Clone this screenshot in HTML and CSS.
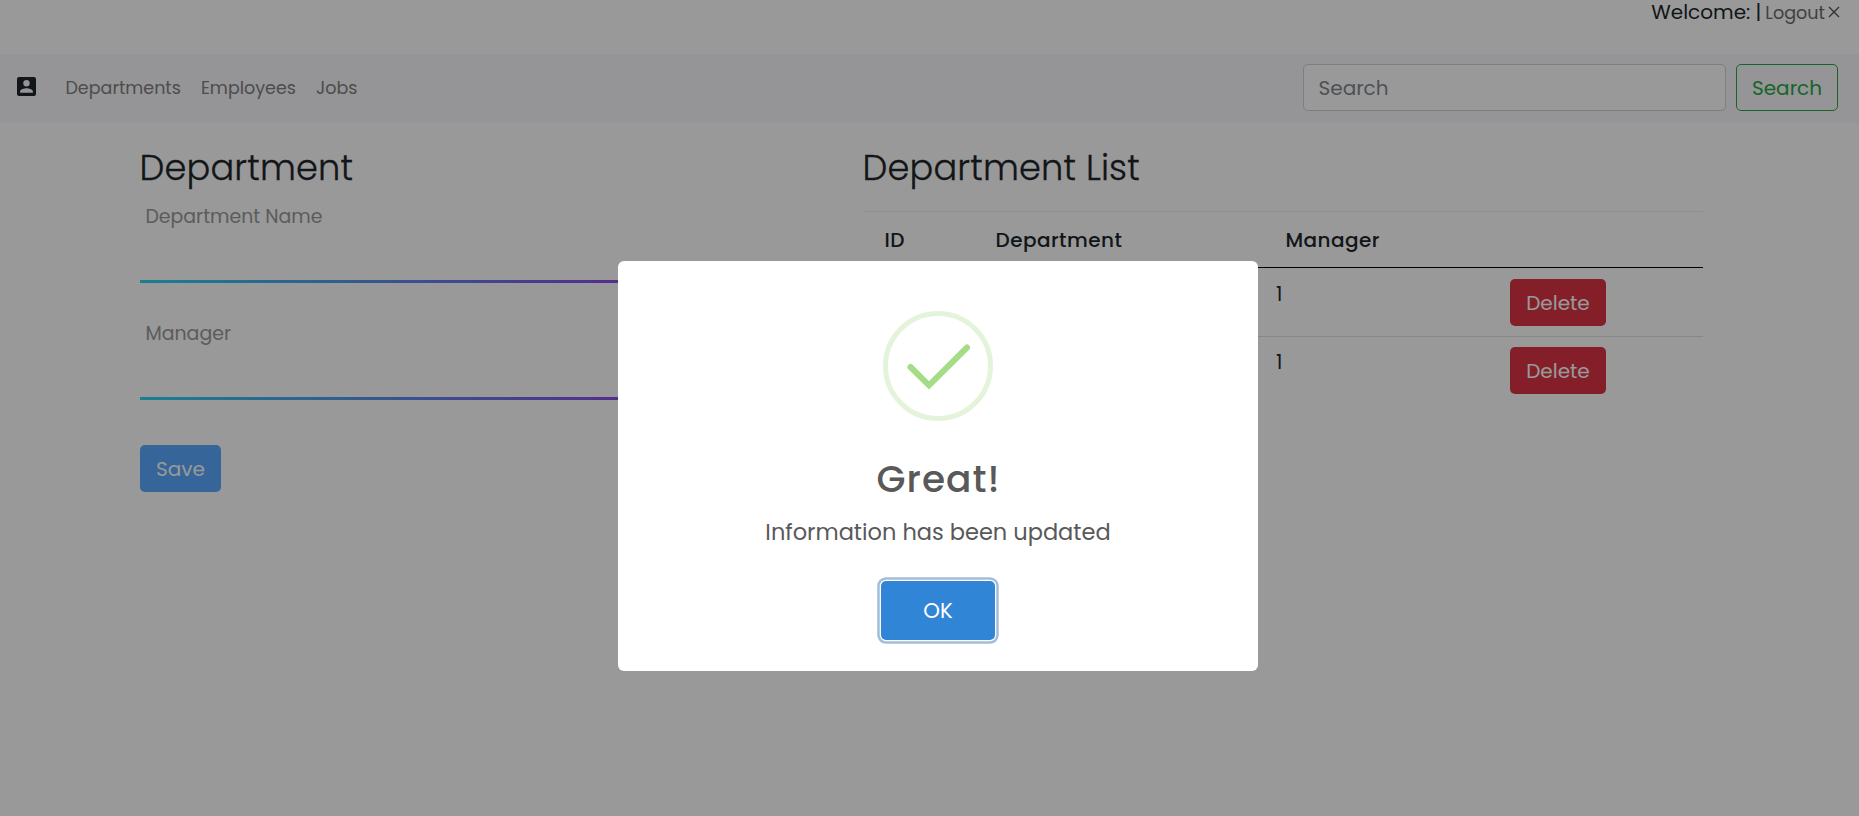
FILE: index.html
```
<!DOCTYPE html>
<html lang="en">
<head>
<meta charset="utf-8">
<title>Department</title>
<link rel="stylesheet" href="styles.css">
</head>
<body>
<header class="topbar"><span class="welcome">Welcome:</span><span class="divider">|</span><a class="logout"><span class="logout-text">Logout</span><svg class="close" viewBox="0 0 12 12"><path d="M1 1l10 10M11 1L1 11"/></svg></a></header>
<nav class="navbar">
  <svg class="brand" viewBox="0 0 19 19"><path fill-rule="evenodd" d="M2 0h15a2 2 0 0 1 2 2v15a2 2 0 0 1-2 2H2a2 2 0 0 1-2-2V2a2 2 0 0 1 2-2zM9.500 3.100a3.200 3.200 0 1 0 0 6.400a3.200 3.200 0 0 0 0-6.400zM3.100 14.500v1.300h12.800v-1.300c0-2.200-4.300-3.300-6.400-3.300s-6.400 1.100-6.400 3.300z"/></svg>
  <div class="links"><a>Departments</a><a>Employees</a><a>Jobs</a></div>
  <form class="search"><div class="search-input">Search</div><div class="btn btn-search">Search</div></form>
</nav>
<main class="content">
  <section class="form-col">
    <h1 class="title">Department</h1>
    <div class="field"><label>Department Name</label></div>
    <div class="field"><label>Manager</label></div>
    <div class="btn btn-save">Save</div>
  </section>
  <section class="list-col">
    <h1 class="title">Department List</h1>
    <div class="table">
      <div class="row head"><span class="col-id">ID</span><span class="col-department">Department</span><span>Manager</span></div>
      <div class="row"><span>1</span><div class="btn btn-delete">Delete</div></div>
      <div class="row second"><span>1</span><div class="btn btn-delete">Delete</div></div>
    </div>
  </section>
</main>
<div class="overlay">
  <div class="modal">
    <svg class="success" viewBox="0 0 110 110"><circle cx="55" cy="55" r="52.500"/><path d="M27.500 56L46 74.300L84 36.500"/></svg>
    <h2 class="modal-title">Great!</h2>
    <p class="modal-text">Information has been updated</p>
    <div class="ok">OK</div>
  </div>
</div>
</body>
</html>
```
FILE: styles.css
```
* { box-sizing: border-box; }
body { margin: 0; height: 816px; overflow: hidden; background: #fff; color: #212529; font-family: Poppins, Inter, "Open Sans", sans-serif; font-size: 20px; line-height: 30px; }
h1, h2, p { margin: 0; font-weight: 400; }
.topbar { height: 54px; display: flex; justify-content: flex-end; align-items: flex-start; padding: 0 19px 0 0; line-height: 25px; }
.divider { width: 6px; margin: 0 4px 0 5px; display: flex; justify-content: center; }
.logout { display: flex; color: #6c6c6c; font-size: 17.600px; line-height: 26px; }
.close { width: 12px; height: 12px; margin: 6px 0 0 3px; fill: none; stroke: #555; stroke-width: 1.400; }
.navbar { height: 69px; background: #f8f8fc; display: flex; align-items: center; padding: 0 21px 2px 17px; }
.brand { width: 19px; height: 19px; margin: -3px 29px 0 0; fill: #212529; }
.links { display: flex; gap: 20px; margin-left: .5px; color: #808080; font-size: 17.500px; }
.search { margin: 0 0 0 auto; display: flex; gap: 10px; }
.search-input { width: 423px; height: 47px; padding: 8px 14.500px; border: 1px solid #ced4da; border-radius: 5px; background: #fff; color: #808890; }
.btn { height: 47px; border-radius: 5px; display: flex; align-items: center; justify-content: center; padding-top: 1px; color: #fff; }
.btn-search { width: 102px; border: 1px solid #28a745; color: #28a745; }
.content { display: flex; padding: 25px 156px 0 140px; }
.form-col { width: 706px; margin-right: 17px; }
.list-col { flex: 1; }
.title { margin-left: -.5px; font-size: 35.200px; line-height: 40px; font-weight: 300; letter-spacing: .15px; -webkit-text-stroke: .3px #212529; }
.field { height: 96px; margin-bottom: 21px; padding: 15px 5.500px; color: #999; font-size: 18.900px; border-bottom: 3px solid; border-image: linear-gradient(to right, #2bd4f0, #b80ceb) 1; }
.title + .field { height: 95px; padding-top: 14px; }
.btn-save { width: 81px; margin-top: 45px; background: #59a9ff; }
.table { margin-top: 23px; margin-left: 1px; border-top: 1px solid #e9ecef; }
.row { display: flex; height: 68px; padding: 11px 97px 0 412px; justify-content: space-between; }
.row.head { height: 56px; padding: 13px 0 0 20.500px; border-bottom: 1px solid #000; justify-content: flex-start; font-weight: 500; letter-spacing: .45px; }
.col-id { width: 111px; }
.col-department { width: 290px; }
.second { padding-top: 10px; border-top: 1px solid #dee2e6; }
.btn-delete { width: 96px; background: #dc3545; }
.overlay { position: absolute; inset: 0; background: rgba(0, 0, 0, .4); display: flex; padding: 261px 0 0 618px; align-items: flex-start; }
.modal { width: 640px; height: 410px; background: #fff; border-radius: 6px; color: #595959; display: flex; flex-direction: column; align-items: center; padding-top: 50px; }
.success { width: 110px; height: 110px; fill: none; stroke: #a5dc86; stroke-width: 6; stroke-linecap: round; }
.success circle { stroke: #e4f4db; stroke-width: 5; }
.modal-title { margin: 36px -1px 0 0; font-size: 37.500px; line-height: 44px; font-weight: 500; letter-spacing: 1px; }
.modal-text { margin: 16px 0 0 0; font-size: 22.500px; line-height: 30px; }
.ok { width: 114px; height: 59px; margin-top: 34px; padding-top: 1px; border-radius: 5px; background: #3085d6; color: #fff; display: flex; align-items: center; justify-content: center; font-size: 21.250px; box-shadow: 0 0 0 1.250px #fff, 0 0 0 3.750px #a3bdd6; }
```
